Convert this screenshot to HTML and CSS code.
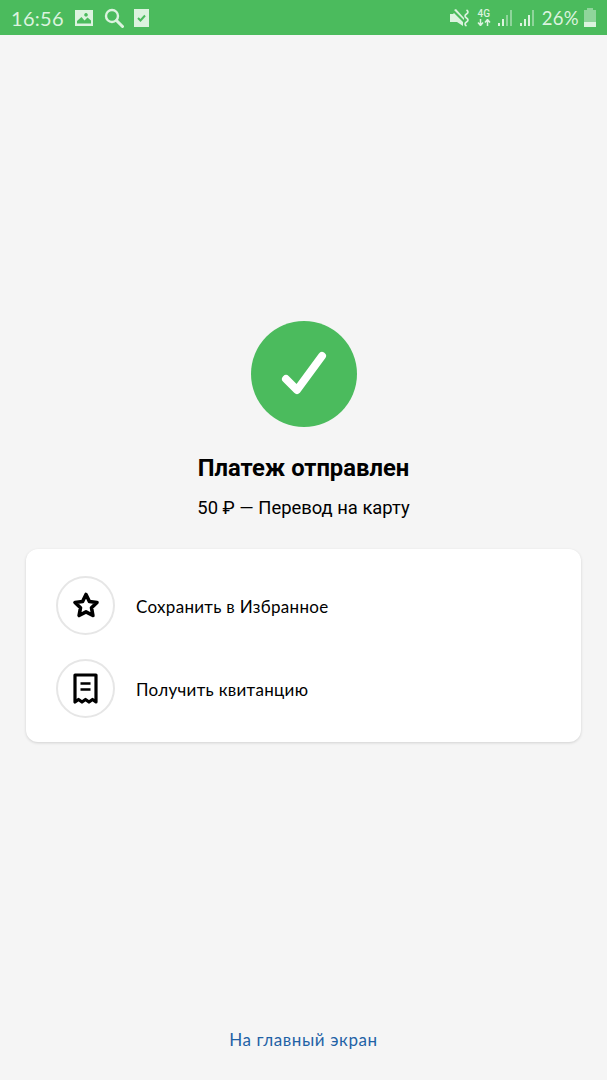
FILE: index.html
```html
<!DOCTYPE html>
<html lang="ru">
<head>
    <meta charset="UTF-8">
    <meta name="viewport" content="width=device-width, initial-scale=1.0">
    <title>Платеж отправлен</title>
    <link rel="stylesheet" href="styles.css">
</head>
<body>
    <header class="status-bar">
        <div class="status-left">
            <span class="status-time">16:56</span>
            <svg class="status-icon" width="20" height="18" viewBox="0 0 20 18">
                <path fill="#dcf3df" fill-rule="evenodd" d="M1 1h18v16H1z M12 4a1.800 1.800 0 1 0 .01 0z M3 14.500h14v-3l-3.500-3-3 3-3-3.500-4.500 4z"/>
            </svg>
            <svg class="status-icon" width="20" height="20" viewBox="0 0 20 20">
                <circle cx="8" cy="8" r="6" fill="none" stroke="#dcf3df" stroke-width="2.400"/>
                <path d="M12.500 12.500L18.500 18.500" stroke="#dcf3df" stroke-width="3" stroke-linecap="round"/>
            </svg>
            <svg class="status-icon" width="15" height="18" viewBox="0 0 15 18">
                <path fill="#dcf3df" d="M0 0h15v18H0z"/>
                <path d="M4 9l2.500 2.500L11 6.500" fill="none" stroke="#4bbb5d" stroke-width="2"/>
            </svg>
        </div>
        <div class="status-right">
            <svg width="20" height="20" viewBox="0 0 20 20">
                <path fill="#dcf3df" d="M0 6h3l1-1 9 9v4l-6-4H0z M4 2l2-1 8 9v2z"/>
                <path d="M16.500 2q3 2 0 4t0 4 0 4 0 4" fill="none" stroke="#dcf3df" stroke-width="1.600"/>
            </svg>
            <div class="net-type">
                <span>4G</span>
                <svg width="14" height="7" viewBox="0 0 14 7">
                    <path d="M3.500 0v6M1 3.500L3.500 6.500 6 3.500M10.500 7V1M8 3.500L10.500 .5 13 3.500" fill="none" stroke="#dcf3df" stroke-width="1.500"/>
                </svg>
            </div>
            <svg width="16" height="18" viewBox="0 0 16 18">
                <path fill="#dcf3df" d="M0 14h2v3H0z M4 10h2v7H4z"/>
                <path fill="#8fd59b" d="M8 6h2v11H8z M12 1h2v16h-2z"/>
            </svg>
            <svg width="16" height="18" viewBox="0 0 16 18">
                <path fill="#dcf3df" d="M0 14h2v3H0z M4 10h2v7H4z M8 6h2v11H8z"/>
                <path fill="#8fd59b" d="M12 1h2v16h-2z"/>
            </svg>
            <span class="status-battery-text">26%</span>
            <svg width="12" height="19" viewBox="0 0 12 19">
                <path fill="#8fd59b" d="M3 0h6v2h3v12H0V2h3z"/>
                <path fill="#dcf3df" d="M0 14h12v5H0z"/>
            </svg>
        </div>
    </header>

    <main class="content">
        <div class="result">
            <div class="check-circle">
                <svg width="46" height="46" viewBox="0 0 46 46">
                    <path d="M5 28L16 39 41 5" fill="none" stroke="#fff" stroke-width="8" stroke-linecap="round" stroke-linejoin="round"/>
                </svg>
            </div>
            <h1 class="result-title">Платеж отправлен</h1>
            <p class="result-sub">50 ₽ — Перевод на карту</p>
        </div>

        <section class="actions">
            <div class="action">
                <div class="action-icon">
                    <svg width="28" height="28" viewBox="0 0 28 28">
                        <path d="M14 2.500l3.400 7 7.600 1-5.500 5.300 1.400 7.700-6.900-3.700-6.900 3.700 1.400-7.700L3 10.500l7.600-1z" fill="none" stroke="#000" stroke-width="3.600" stroke-linejoin="round"/>
                    </svg>
                </div>
                <span class="action-text">Сохранить в Избранное</span>
            </div>
            <div class="action">
                <div class="action-icon">
                    <svg width="25" height="32" viewBox="0 0 25 32">
                        <path d="M2 2h21v27l-3.500-2.500-3.500 2.500-3.500-2.500-3.500 2.500-3.500-2.500L2 29z" fill="none" stroke="#000" stroke-width="3.200" stroke-linejoin="round"/>
                        <path d="M7.500 10.500h10M7.500 16.500h10" stroke="#000" stroke-width="2.600"/>
                    </svg>
                </div>
                <span class="action-text">Получить квитанцию</span>
            </div>
        </section>

        <a class="home-link" href="#">На главный экран</a>
    </main>
</body>
</html>
```
FILE: styles.css
```css
* {
    box-sizing: border-box;
}

html, body {
    height: 100%;
}

body {
    display: flex;
    flex-direction: column;
    margin: 0;
    background-color: #f5f5f5;
    color: #000;
    font-family: 'Roboto', sans-serif;
    overflow: hidden;
}

.status-bar {
    display: flex;
    justify-content: space-between;
    align-items: center;
    height: 35px;
    padding: 0 11px 0 11px;
    background-color: #4bbb5d;
    color: #dcf3df;
}

.status-left, .status-right {
    display: flex;
    align-items: center;
}

.status-left {
    gap: 10px;
}

.status-right {
    gap: 6px;
}

.status-time, .status-battery-text {
    font-family: 'Lato', sans-serif;
    font-size: 20px;
    letter-spacing: 0.3px;
}

.status-battery-text {
    margin-right: -1px;
    font-size: 18.500px;
}

.net-type {
    display: flex;
    flex-direction: column;
    align-items: center;
    margin: 0 1px;
    font-size: 10px;
    font-weight: 500;
    line-height: 10px;
}

.content {
    display: flex;
    flex: 1;
    flex-direction: column;
    padding: 286px 26px 0 26px;
}

.result {
    display: flex;
    flex-direction: column;
    align-items: center;
}

.check-circle {
    display: flex;
    justify-content: center;
    align-items: center;
    width: 106px;
    height: 106px;
    border-radius: 50%;
    background-color: #4bbb5d;
}

.result-title {
    margin: 23px 0 0 0;
    font-size: 23.800px;
    font-weight: 700;
    line-height: 36px;
}

.result-sub {
    margin: 7px 0 0 0;
    font-size: 18.400px;
    line-height: 30px;
}

.actions {
    display: flex;
    flex-direction: column;
    gap: 24px;
    margin-top: 26px;
    padding: 27px 30px 24px 30px;
    border-radius: 12px;
    background-color: #fff;
    box-shadow: 0 1px 3px rgba(0, 0, 0, 0.15);
}

.action {
    display: flex;
    align-items: center;
    gap: 21px;
}

.action-icon {
    display: flex;
    justify-content: center;
    align-items: center;
    width: 59px;
    height: 59px;
    border: 2px solid #e6e6e6;
    border-radius: 50%;
}

.action-text, .home-link {
    font-family: 'Lato', sans-serif;
    font-size: 17px;
    letter-spacing: 0.3px;
}

.action-text {
    padding-top: 2px;
}

.home-link {
    position: absolute;
    left: 0;
    right: 0;
    top: 1029px;
    color: #1f62a6;
    letter-spacing: 0.6px;
    text-align: center;
    text-decoration: none;
}
```
